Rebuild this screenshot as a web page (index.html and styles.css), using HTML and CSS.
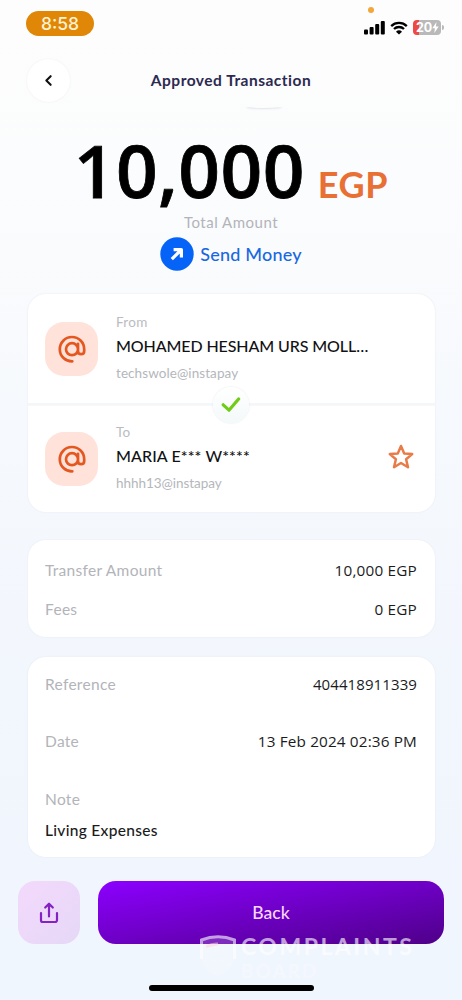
FILE: index.html
```html
<!DOCTYPE html>
<html lang="en">
<head>
<meta charset="utf-8">
<meta name="viewport" content="width=device-width, initial-scale=1">
<title>Approved Transaction</title>
<link rel="stylesheet" href="styles.css">
</head>
<body>
<main class="screen">
  <div class="status">
    <span class="clock">8:58</span>
    <div class="status-icons">
      <i class="mic-dot"></i>
      <svg class="signal" viewBox="0 0 21 14"><rect x="0" y="8.5" width="4" height="5" rx="1"/><rect x="5.6" y="6" width="4" height="7.5" rx="1"/><rect x="11.2" y="3" width="4" height="10.5" rx="1"/><rect x="16.8" y="0" width="4" height="13.5" rx="1"/></svg>
      <svg class="wifi" viewBox="0 0 18 14"><path d="M1.2 5.1a11.2 11.2 0 0 1 15.6 0M4 8a7.2 7.2 0 0 1 10 0" fill="none" stroke="#000" stroke-width="2.3"/><path d="M9 13.6 6 10.7a4.4 4.4 0 0 1 6 0z"/></svg>
      <span class="battery">20<svg viewBox="0 0 7 12"><path d="M4.6 0 0 6.8h2.8L2.2 12 7 4.8H4z" fill="#fff"/></svg></span>
    </div>
  </div>

  <header class="bar">
    <button class="back-circle" aria-label="Back"><svg viewBox="0 0 8 12"><path d="M6 2 2 6l4 4" fill="none" stroke="#111" stroke-width="1.9" stroke-linecap="round" stroke-linejoin="round"/></svg></button>
    <h1 class="title">Approved Transaction</h1>
  </header>

  <div class="shade"></div>
  <section class="total">
    <div class="amount"><span class="figure">10,000</span><span class="currency">EGP</span></div>
    <div class="caption">Total Amount</div>
    <div class="kind"><svg viewBox="0 0 34 34"><circle cx="17" cy="17" r="16.7" fill="#0563f8"/><path d="M11.8 22.2 21 13M13.6 12.6h7.800v7.800" fill="none" stroke="#fff" stroke-width="3.2" stroke-linejoin="round"/></svg><span>Send Money</span></div>
  </section>

  <section class="card parties">
    <div class="party">
      <div class="avatar"><svg viewBox="0 0 28 28"><path d="M14.3 26.4A12.2 12.2 0 1 1 26.2 14.2v1.7c0 4.3-6.2 4.3-6.2 0V8.8M20 14.2a6 6 0 1 1-12 0 6 6 0 0 1 12 0z"/></svg></div>
      <div class="who"><span class="role">From</span><span class="name name-from">MOHAMED HESHAM URS MOLL…</span><span class="handle">techswole@instapay</span></div>
    </div>
    <div class="divider"><span class="check"><svg viewBox="0 0 20 16"><path d="M2.2 7.8 8 13.2 17.6 2" fill="none" stroke="#70cc16" stroke-width="3.2" stroke-linecap="round" stroke-linejoin="round"/></svg></span></div>
    <div class="party party-to">
      <div class="avatar"><svg viewBox="0 0 28 28"><path d="M14.3 26.4A12.2 12.2 0 1 1 26.2 14.2v1.7c0 4.3-6.2 4.3-6.2 0V8.8M20 14.2a6 6 0 1 1-12 0 6 6 0 0 1 12 0z"/></svg></div>
      <div class="who"><span class="role">To</span><span class="name">MARIA E*** W****</span><span class="handle handle-to">hhhh13@instapay</span></div>
      <svg class="star" viewBox="0 0 26 26"><path d="m13 2 3.2 7.4 8 .7-6.1 5.200 1.900 7.900-7-4.200-7 4.200 1.900-7.900-6.100-5.200 8-.7z"/></svg>
    </div>
  </section>

  <section class="card fees">
    <div class="row"><span class="label">Transfer Amount</span><span class="value num">10,000 EGP</span></div>
    <div class="row"><span class="label">Fees</span><span class="value num">0 EGP</span></div>
  </section>

  <section class="card details">
    <div class="row"><span class="label">Reference</span><span class="value num ref">404418911339</span></div>
    <div class="row"><span class="label">Date</span><span class="value num date">13 Feb 2024 02:36 PM</span></div>
    <div class="note"><span class="label">Note</span><span class="value">Living Expenses</span></div>
  </section>

  <footer class="actions">
    <button class="share" aria-label="Share"><svg viewBox="0 0 20 22"><path d="M2 11v7.2a1.8 1.8 0 0 0 1.8 1.8h12.4a1.8 1.8 0 0 0 1.8-1.8V11M10 14.500V2M6.200 5.500 10 1.700l3.800 3.800"/></svg></button>
    <button class="primary">Back</button>
  </footer>
  <div class="home"></div>
  <div class="watermark">
    <svg viewBox="0 0 36 44"><path d="M1.500 5Q18-1.500 34.500 5v19Q33 35 18 42 3 35 1.500 24z" fill="#fff" fill-opacity=".28"/><path d="M1.500 24V5Q18-1.500 34.500 5v19" fill="none" stroke="#fff" stroke-width="3"/><path d="M6 10q6-3 12-2.500v3Q12 11 6 13z" fill="#ffd8e4"/></svg>
    <div><span class="wm-top">COMPLAINTS</span><span class="wm-low">BOARD</span></div>
  </div>
</main>
</body>
</html>
```
FILE: styles.css
```css
* { box-sizing: border-box; }
body { margin: 0; font-family: Lato, "Open Sans", sans-serif; color: #1b1b1d; }
button { border: 0; padding: 0; font: inherit; }
svg { display: block; flex: none; }
.screen {
  position: relative; width: 462px; height: 1000px; overflow: hidden;
  display: flex; flex-direction: column;
  background: linear-gradient(180deg, #fdfdfd 0%, #fbfcfd 18%, #f6f9fd 42%, #f2f6fd 68%, #f0f6fe 100%);
}
.status { height: 59px; padding: 11px 20px 0 26px; display: flex; justify-content: space-between; align-items: flex-start; flex: none; }
.clock { width: 68px; height: 25px; border-radius: 13px; background: #e08708; color: #fff3d2; font: 500 17.500px/25px Inter, sans-serif; text-align: center; }
.status-icons { position: relative; display: flex; align-items: center; gap: 5px; padding-top: 9px; margin-right: 1px; }
.mic-dot { position: absolute; left: 4px; top: -4px; width: 6px; height: 6px; border-radius: 50%; background: #f3a73a; }
.signal { width: 21px; height: 14px; }
.wifi { width: 18px; height: 14px; }
.battery {
  position: relative; width: 28px; height: 15px; border-radius: 4px; padding-left: 3px;
  display: flex; align-items: center;
  background: linear-gradient(90deg, #ed4a43 0 20%, #b9b9b9 20%);
  color: #fff; font: 700 12.500px/15px Inter, sans-serif;
}
.battery::after { content: ""; position: absolute; right: -3px; top: 5px; width: 2px; height: 5px; border-radius: 0 2px 2px 0; background: #b9b9b9; }
.battery svg { width: 7px; height: 11px; }
.bar { height: 43px; padding: 0 27px; display: grid; grid-template-columns: 43px 1fr 43px; align-items: center; flex: none; }
.back-circle { width: 43px; height: 43px; border-radius: 50%; background: #fff; box-shadow: 0 0 2px #eceef1; display: grid; place-items: center; }
.back-circle svg { width: 9px; height: 13px; }
.title { margin: 0 0 2px; text-align: center; font-size: 15.500px; line-height: 20px; font-weight: 700; color: #2c2a50; letter-spacing: .5px; white-space: nowrap; }
.shade { align-self: center; width: 38px; height: 5px; margin: 1px 0 0 66px; border-radius: 50%; box-shadow: 0 2px 2px -1px #dfe3e8; flex: none; }
.total { height: 186px; padding-top: 26px; display: flex; flex-direction: column; align-items: center; flex: none; }
.amount { display: flex; align-items: baseline; gap: 13px; height: 77px; line-height: 72px; color: #000; white-space: nowrap; }
.figure { font: 600 73px/72px "Open Sans", sans-serif; -webkit-text-stroke: .8px #000; letter-spacing: .4px; }
.currency { font-size: 36px; font-weight: 700; color: #e87035; letter-spacing: .6px; }
.caption { height: 22px; line-height: 22px; font-size: 15px; color: #b2b4b9; letter-spacing: .5px; }
.kind { display: flex; align-items: center; gap: 6px; height: 42px; color: #1968df; font-size: 18px; font-weight: 500; letter-spacing: .2px; }
.kind svg { width: 34px; height: 34px; }
.card { width: 407px; margin-left: 27.500px; border-radius: 18px; background: #fff; box-shadow: 0 0 2px #e3e8ee; flex: none; }
.parties { height: 218px; }
.party { height: 109px; padding: 0 21px 0 17.500px; display: flex; align-items: center; }
.party-to { height: 106px; }
.divider { position: relative; height: 3px; border-top: 2px solid #f4f6f8; border-bottom: 1px solid #f7f8fa; }
.check { position: absolute; left: 185px; top: -18px; width: 36px; height: 36px; border-radius: 50%; background: linear-gradient(#fff, #f4f9fa); box-shadow: 0 0 2px #dde2e6; display: grid; place-items: center; }
.check svg { width: 20px; height: 16px; }
.avatar { width: 53px; height: 54px; border-radius: 19px; background: #ffe2da; display: grid; place-items: center; flex: none; }
.avatar svg { width: 28px; height: 28px; fill: none; stroke: #e55720; stroke-width: 2.700; stroke-linecap: round; }
.who { flex: 1; padding: 0 0 2px 18px; display: flex; flex-direction: column; white-space: nowrap; }
.party-to .who { padding-bottom: 4px; }
.role { height: 21px; line-height: 18px; font-size: 13.500px; color: #babcc1; letter-spacing: .3px; }
.name { height: 28px; line-height: 24px; font-size: 16px; font-weight: 500; color: #121214; letter-spacing: .1px; }
.name-from { letter-spacing: -.1px; }
.handle { height: 20px; line-height: 23px; font-size: 13.500px; color: #b4b7bc; letter-spacing: .08px; }
.handle-to { letter-spacing: -.05px; }
.star { width: 26px; height: 26px; margin-bottom: 5px; fill: none; stroke: #e87c48; stroke-width: 2.500; stroke-linejoin: round; }
.fees { height: 97px; margin-top: 28px; padding: 10.500px 17.500px; }
.row { display: flex; justify-content: space-between; line-height: 39px; }
.label { font-size: 15.500px; color: #b2b4b9; letter-spacing: .3px; }
.value { font-size: 15.500px; font-weight: 500; letter-spacing: .3px; }
.num { font: 500 15.300px/39px "Open Sans", sans-serif; letter-spacing: .2px; }
.ref { font-size: 15px; letter-spacing: .1px; }
.date { letter-spacing: .15px; }
.details { height: 200px; margin-top: 20px; padding: 7.500px 17.500px; }
.details .row { height: 57.500px; }
.note { display: flex; flex-direction: column; line-height: 39px; }
.note .value { line-height: 23px; }
.actions { display: flex; gap: 18px; padding: 0 18px; margin-top: 24px; height: 63px; flex: none; }
.share { width: 62px; height: 63px; border-radius: 17px; background: linear-gradient(135deg, #f3d9fc, #e6d8f6); display: grid; place-items: center; }
.share svg { width: 20px; height: 22px; fill: none; stroke: #8422c4; stroke-width: 2.200; stroke-linecap: round; stroke-linejoin: round; }
.primary { flex: 1; border-radius: 18px; background: linear-gradient(170deg, #8c00ff 0%, #7100cb 45%, #4e0089 100%); color: #f8d8ff; font-size: 17.500px; font-weight: 500; }
.home { align-self: center; width: 165px; height: 6px; margin-top: 41px; border-radius: 3px; background: #000; flex: none; }
.watermark { position: absolute; left: 200px; top: 935px; display: flex; gap: 5px; opacity: .62; color: #fff; pointer-events: none; }
.watermark svg { width: 36px; height: 44px; }
.watermark div { display: flex; flex-direction: column; }
.wm-top { font-size: 23px; line-height: 23px; font-weight: 700; letter-spacing: 2.500px; }
.wm-low { font-size: 19px; line-height: 22px; margin-top: 2px; font-weight: 700; letter-spacing: 2px; opacity: .55; }
```
